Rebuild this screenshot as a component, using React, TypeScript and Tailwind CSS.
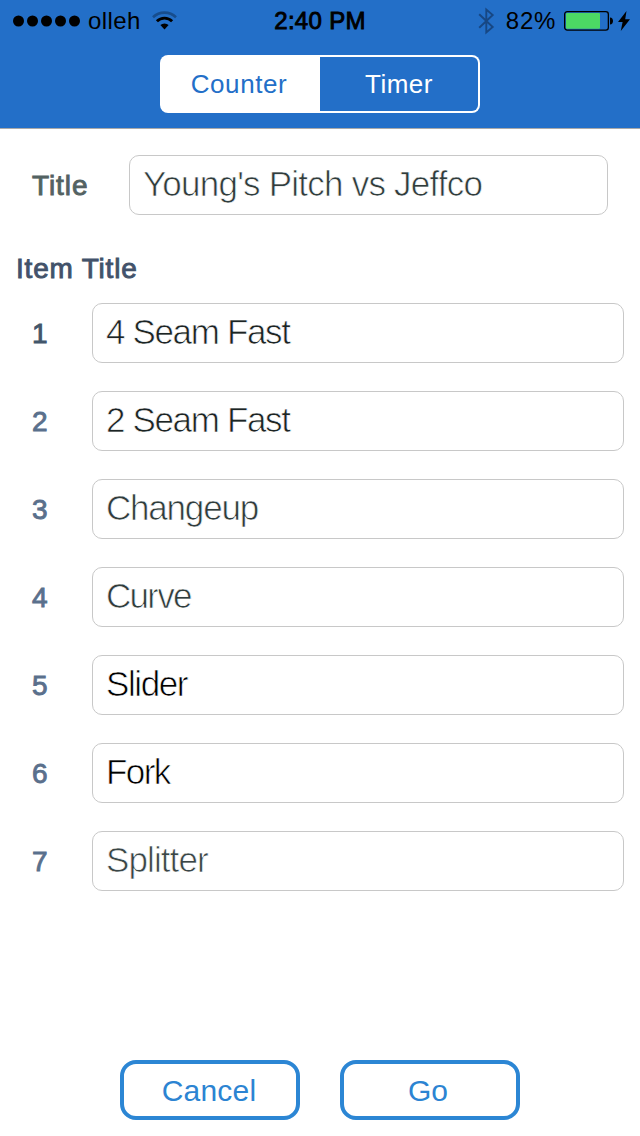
const thin = "[-webkit-text-stroke:0.7px_white]";
const medium = "[-webkit-text-stroke:0.9px_currentColor]";

type Item = { title: string; color: string; numberColor: string; spacing: string };

const items: Item[] = [
  { title: "4 Seam Fast", color: "text-[#1c2424]", numberColor: "text-[#42566b]", spacing: "tracking-[-1.35px]" },
  { title: "2 Seam Fast", color: "text-[#1c2424]", numberColor: "text-[#5a708c]", spacing: "tracking-[-1.35px]" },
  { title: "Changeup", color: "text-[#303c3c]", numberColor: "text-[#5a708c]", spacing: "tracking-[-1.2px]" },
  { title: "Curve", color: "text-[#303c3c]", numberColor: "text-[#5a708c]", spacing: "tracking-[-1.7px]" },
  { title: "Slider", color: "text-black", numberColor: "text-[#5a708c]", spacing: "tracking-[-1.4px]" },
  { title: "Fork", color: "text-black", numberColor: "text-[#5a708c]", spacing: "tracking-[-1.6px]" },
  { title: "Splitter", color: "text-[#3a4646]", numberColor: "text-[#5a708c]", spacing: "tracking-[-0.9px]" },
];

function Wifi() {
  return (
    <svg className="ml-[11px] h-[20px] w-[25px]" viewBox="0 0 25 20" fill="none">
      <path d="M1 6.3a16.5 16.5 0 0 1 23 0" stroke="#174d8d" strokeWidth="2.6" />
      <path d="M4.9 10.3a10.8 10.8 0 0 1 15.2 0" stroke="black" strokeWidth="2.9" />
      <path d="M8.4 14.1a5.8 5.8 0 0 1 8.200 0L12.500 18.400z" fill="black" />
    </svg>
  );
}

function Bluetooth() {
  return (
    <svg className="h-[28px] w-[17px]" viewBox="0 0 17 28" fill="none" stroke="#174783" strokeWidth="1.9">
      <path d="M1.2 7.3 14.7 20 8.3 25.4V2.600L14.7 8 1.2 20.7" />
    </svg>
  );
}

function StatusBar() {
  return (
    <div className="grid h-[41px] grid-cols-[1fr_auto_1fr] items-center text-[24px] leading-[42px] text-black">
      <div className="flex items-center pl-[13px]">
        <svg className="mr-[7px] h-[12px] w-[68px]" viewBox="0 0 68 12">
          {[5.5, 19.5, 33.5, 47.5, 61.5].map((x) => (
            <circle key={x} cx={x} cy="6" r="5.5" />
          ))}
        </svg>
        <span className="tracking-[0.4px]">olleh</span>
        <Wifi />
      </div>
      <span className={`tracking-[0.3px] ${medium}`}>2:40 PM</span>
      <div className="flex items-center justify-end pr-[10px]">
        <Bluetooth />
        <span className="mr-2 ml-[11px] tracking-[0.7px]">82%</span>
        <svg className="h-[20px] w-[49px]" viewBox="0 0 49 20">
          <rect x="0.65" y="0.65" width="43.7" height="18.4" rx="2.6" fill="none" stroke="black" strokeWidth="1.3" />
          <rect x="2" y="2" width="34" height="15.7" rx="1" fill="#4cd964" />
          <path d="M46 6.500c2 .2 3 1.500 3 3.500s-1 3.300-3 3.500z" fill="black" />
        </svg>
        <svg className="ml-[5px] h-[20px] w-[12px]" viewBox="0 0 12 20">
          <path d="M8.500 0 0 11h4.600L2.800 20 12 8.300H7.200z" />
        </svg>
      </div>
    </div>
  );
}

export default function App() {
  return (
    <div className="flex h-[1136px] w-[640px] flex-col bg-white font-['Liberation_Sans',Arial,sans-serif]">
      <header className="flex h-[129px] flex-col border-b border-[#a9a9a9] bg-[#236fc8]">
        <StatusBar />
        <div className="mt-[14px] flex h-[58px] w-[320px] self-center text-[26px]">
          <button className="w-[160px] rounded-l-[8px] bg-white pr-[2px] leading-[58px] tracking-[0.6px] text-[#236fc8]">
            Counter
          </button>
          <button className="w-[160px] rounded-r-[8px] border-2 border-l-0 border-white leading-[54px] tracking-[0.5px] text-white">
            Timer
          </button>
        </div>
      </header>

      <main className="flex flex-1 flex-col pt-[26px]">
        <div className="flex h-[60px] items-center pr-8 pl-8">
          <label className={`w-[97px] pt-[2px] text-[28px] tracking-[0.9px] text-[#536262] ${medium}`}>Title</label>
          <div className={`h-[60px] flex-1 rounded-[10px] border border-[#c8c8c8] pl-[13px] text-[35px] leading-[56px] tracking-[-0.77px] whitespace-nowrap text-[#303c3c] ${thin}`}>
            Young's Pitch vs Jeffco
          </div>
        </div>

        <h2 className={`mt-[36px] ml-4 h-[36px] text-[28px] leading-[36px] tracking-[0.8px] text-[#42526a] ${medium}`}>
          Item Title
        </h2>

        <div className="mt-[16px] flex flex-col gap-7 pr-4 pl-8">
          {items.map((item, i) => (
            <div key={item.title} className="flex h-[60px] items-center">
              <span className={`w-[60px] pt-[2px] text-[28px] ${item.numberColor} ${medium}`}>{i + 1}</span>
              <div className={`h-[60px] flex-1 rounded-[10px] border border-[#c8c8c8] pl-[13px] text-[35px] leading-[56px] whitespace-nowrap ${item.spacing} ${item.color} ${thin}`}>
                {item.title}
              </div>
            </div>
          ))}
        </div>

        <div className="mt-auto mb-4 flex justify-center gap-10 text-[30px] text-[#2c84d2]">
          <button className="h-[60px] w-[180px] rounded-[16px] border-4 border-[#2c86d4] pr-[2px] leading-[54px] tracking-[0.2px]">
            Cancel
          </button>
          <button className="h-[60px] w-[180px] rounded-[16px] border-4 border-[#2c86d4] pr-1 leading-[54px]">Go</button>
        </div>
      </main>
    </div>
  );
}
